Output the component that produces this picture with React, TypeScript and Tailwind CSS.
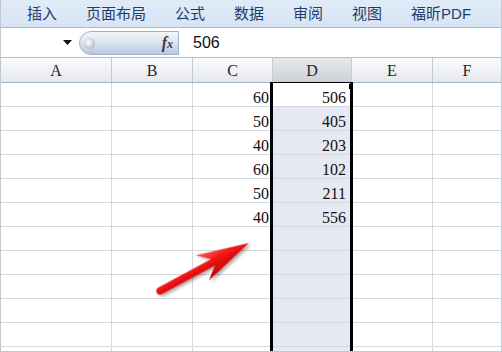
import React from 'react'

const menus = ['插入', '页面布局', '公式', '数据', '审阅', '视图', '福昕PDF']

const cols = [
    { label: 'A', w: 'w-[111px]' },
    { label: 'B', w: 'w-[81px]' },
    { label: 'C', w: 'w-[80px]' },
    { label: 'D', w: 'w-[79px]' },
    { label: 'E', w: 'w-[81px]' },
    { label: 'F', w: 'flex-1' },
]

const cVals = ['60', '50', '40', '60', '50', '40']
const dVals = ['506', '405', '203', '102', '211', '556']
const rows = Array.from({ length: 12 }, (_, i) => i)

const serif = 'font-["Liberation_Serif",serif]'

const App = () => {
    return (
        <div className="relative w-[502px] h-[352px] overflow-hidden bg-white border-x border-b border-[#c4c7cc] flex flex-col">
            {/* menu bar */}
            <div className='h-[28px] shrink-0 flex items-center gap-[29px] pl-[26px] bg-gradient-to-b from-[#e0ebf8] to-[#d6e4f5] border-b border-[#a3bcdb] text-[15px] text-[#1f3d68] font-["Liberation_Sans","Noto_Sans_CJK_SC",sans-serif]'>
                {menus.map((m) => (
                    <span key={m} className="leading-none">{m}</span>
                ))}
            </div>

            {/* formula bar */}
            <div className="h-[30px] shrink-0 flex items-center bg-white border-b border-[#a9bdd6]">
                <div className="w-[78px] h-full flex items-center justify-end pr-[7px]">
                    <svg width="9" height="5" viewBox="0 0 9 5">
                        <polygon points="0,0 9,0 4.5,5" fill="#111" />
                    </svg>
                </div>
                <div className="relative w-[100px] h-[24px] rounded-l-full border border-[#9db2cd] bg-gradient-to-b from-[#f3f6fa] via-[#d9e3ef] to-[#b7c8dd] flex items-center justify-end pr-[5px]">
                    <div className="absolute left-[4px] top-[6px] w-[11px] h-[11px] rounded-full bg-[radial-gradient(circle_at_40%_40%,#ffffff,#b9c1cc_70%,#9aa6b6)]" />
                    <span className={`${serif} italic font-bold text-[16px] text-[#3a3d42] leading-none`}>
                        f<span className="text-[12px]">x</span>
                    </span>
                </div>
                <span className='pl-[14px] text-[16px] text-[#111] font-["Liberation_Sans",sans-serif] leading-none'>506</span>
            </div>

            {/* column headers */}
            <div className="h-[25px] shrink-0 flex border-b border-[#9fb1c8]">
                {cols.map((c, i) => (
                    <div
                        key={c.label}
                        className={`${c.w} h-full flex items-center justify-center pt-[2px] ${serif} text-[16px] text-[#262626] ${
                            i < 5 ? 'border-r border-[#c3cad4]' : ''
                        } ${
                            c.label === 'D'
                                ? 'bg-gradient-to-b from-[#e6e8eb] to-[#cdd1d7]'
                                : 'bg-gradient-to-b from-[#fafbfc] to-[#e5e8ec]'
                        }`}
                    >
                        {c.label}
                    </div>
                ))}
            </div>

            {/* cells */}
            <div className="relative flex-1">
                {rows.map((r) => (
                    <div key={r} className="h-[24px] flex border-b border-[#d5d8dd]">
                        {cols.map((c, i) => {
                            const isD = c.label === 'D'
                            let val = ''
                            if (c.label === 'C' && r < 6) val = cVals[r]
                            if (isD && r < 6) val = dVals[r]
                            return (
                                <div
                                    key={c.label}
                                    className={`${c.w} h-full flex items-end justify-end ${
                                        isD ? 'pr-[5px]' : 'pr-[3px]'
                                    } ${serif} text-[16px] leading-[17px] text-[#111] ${
                                        i < 5 ? 'border-r border-[#d5d8dd]' : ''
                                    } ${isD && r > 0 ? 'bg-[#e6e9f3]' : ''}`}
                                >
                                    {val}
                                </div>
                            )
                        })}
                    </div>
                ))}

                {/* selection outline for column D */}
                <div className="absolute left-[269px] top-[-1px] bottom-0 w-[83px] border-x-[3px] border-t border-black pointer-events-none" />
                <div className="absolute left-[348px] top-[1px] w-[4px] h-[5px] bg-black" />
            </div>

            {/* red arrow */}
            <svg className="absolute inset-0 pointer-events-none" width="502" height="352">
                <defs>
                    <linearGradient id="arrowFill" x1="0" y1="0" x2="0" y2="1">
                        <stop offset="0" stopColor="#ff5a5a" />
                        <stop offset="0.45" stopColor="#f01414" />
                        <stop offset="1" stopColor="#b80000" />
                    </linearGradient>
                    <filter id="arrowShadow" x="-20%" y="-40%" width="140%" height="180%">
                        <feDropShadow dx="1.5" dy="2.5" stdDeviation="1.6" floodColor="#000" floodOpacity="0.35" />
                    </filter>
                </defs>
                <g transform="translate(248 243) rotate(-28.3)" filter="url(#arrowShadow)">
                    <path
                        d="M0,0 L-53,-14.5 L-41,-3.8 L-101,-3.8 A3.8,3.8 0 0 0 -101,3.8 L-41,3.8 L-53,14 Z"
                        fill="url(#arrowFill)"
                    />
                </g>
            </svg>
        </div>
    )
}

export default App
